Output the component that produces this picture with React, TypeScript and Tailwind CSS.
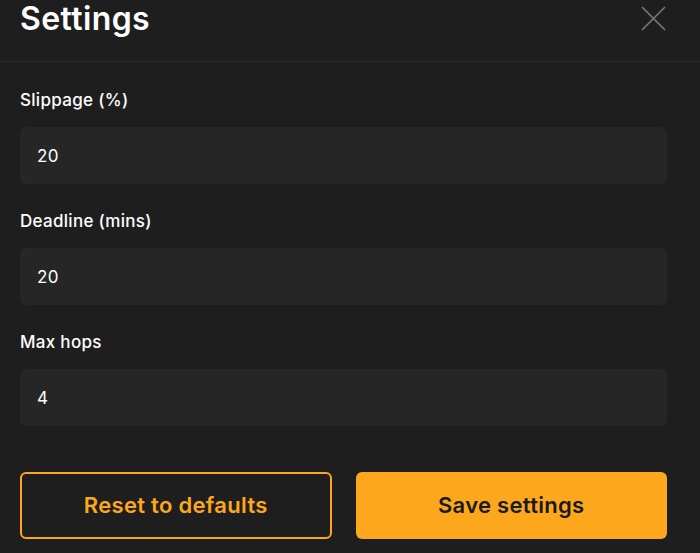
import React, { useState } from "react";

const fields = [
  { label: "Slippage (%)", value: "20" },
  { label: "Deadline (mins)", value: "20" },
  { label: "Max hops", value: "4" },
];

function App() {
  const [values, setValues] = useState(fields.map((f) => f.value));

  return (
    <div
      className="w-[700px] h-[553px] bg-[#1e1e1e] text-white overflow-hidden"
      style={{ fontFamily: "Inter, 'Liberation Sans', sans-serif" }}
    >
      <div className="h-[62px] border-b border-[#2a2828] flex items-start justify-between pl-5 pr-[34px]">
        <h1 className="text-[32px] leading-[38px] font-semibold tracking-[0.4px]">Settings</h1>
        <button className="mt-[6px] text-[#7a7a7a]">
          <svg width="25" height="25" viewBox="0 0 25 25" fill="none">
            <path d="M1 1L24 24M24 1L1 24" stroke="currentColor" strokeWidth="1.6" />
          </svg>
        </button>
      </div>
      <div className="pl-5 pr-[33px] pt-[26px]">
        {fields.map((field, index) => (
          <div key={index} className="mb-[25px]">
            <p className="text-[17px] leading-[24px] font-medium tracking-[0.3px] mb-[15px]">{field.label}</p>
            <input
              value={values[index]}
              onChange={(e) => {
                const next = [...values];
                next[index] = e.target.value;
                setValues(next);
              }}
              className="w-full h-[57px] rounded-md bg-[#262626] px-[17px] text-[17px] tracking-[0.3px] text-white outline-none"
            />
          </div>
        ))}
        <div className="grid grid-cols-2 gap-6 mt-[46px]">
          <button className="h-[67px] rounded-md border-2 border-[#fca71c] text-[#fca71c] text-[22px] font-semibold tracking-[0.3px]">
            Reset to defaults
          </button>
          <button className="h-[67px] rounded-md bg-[#fca71c] text-[#1a1a1a] text-[22px] font-semibold tracking-[0.3px]">
            Save settings
          </button>
        </div>
      </div>
    </div>
  );
}

export default App;
